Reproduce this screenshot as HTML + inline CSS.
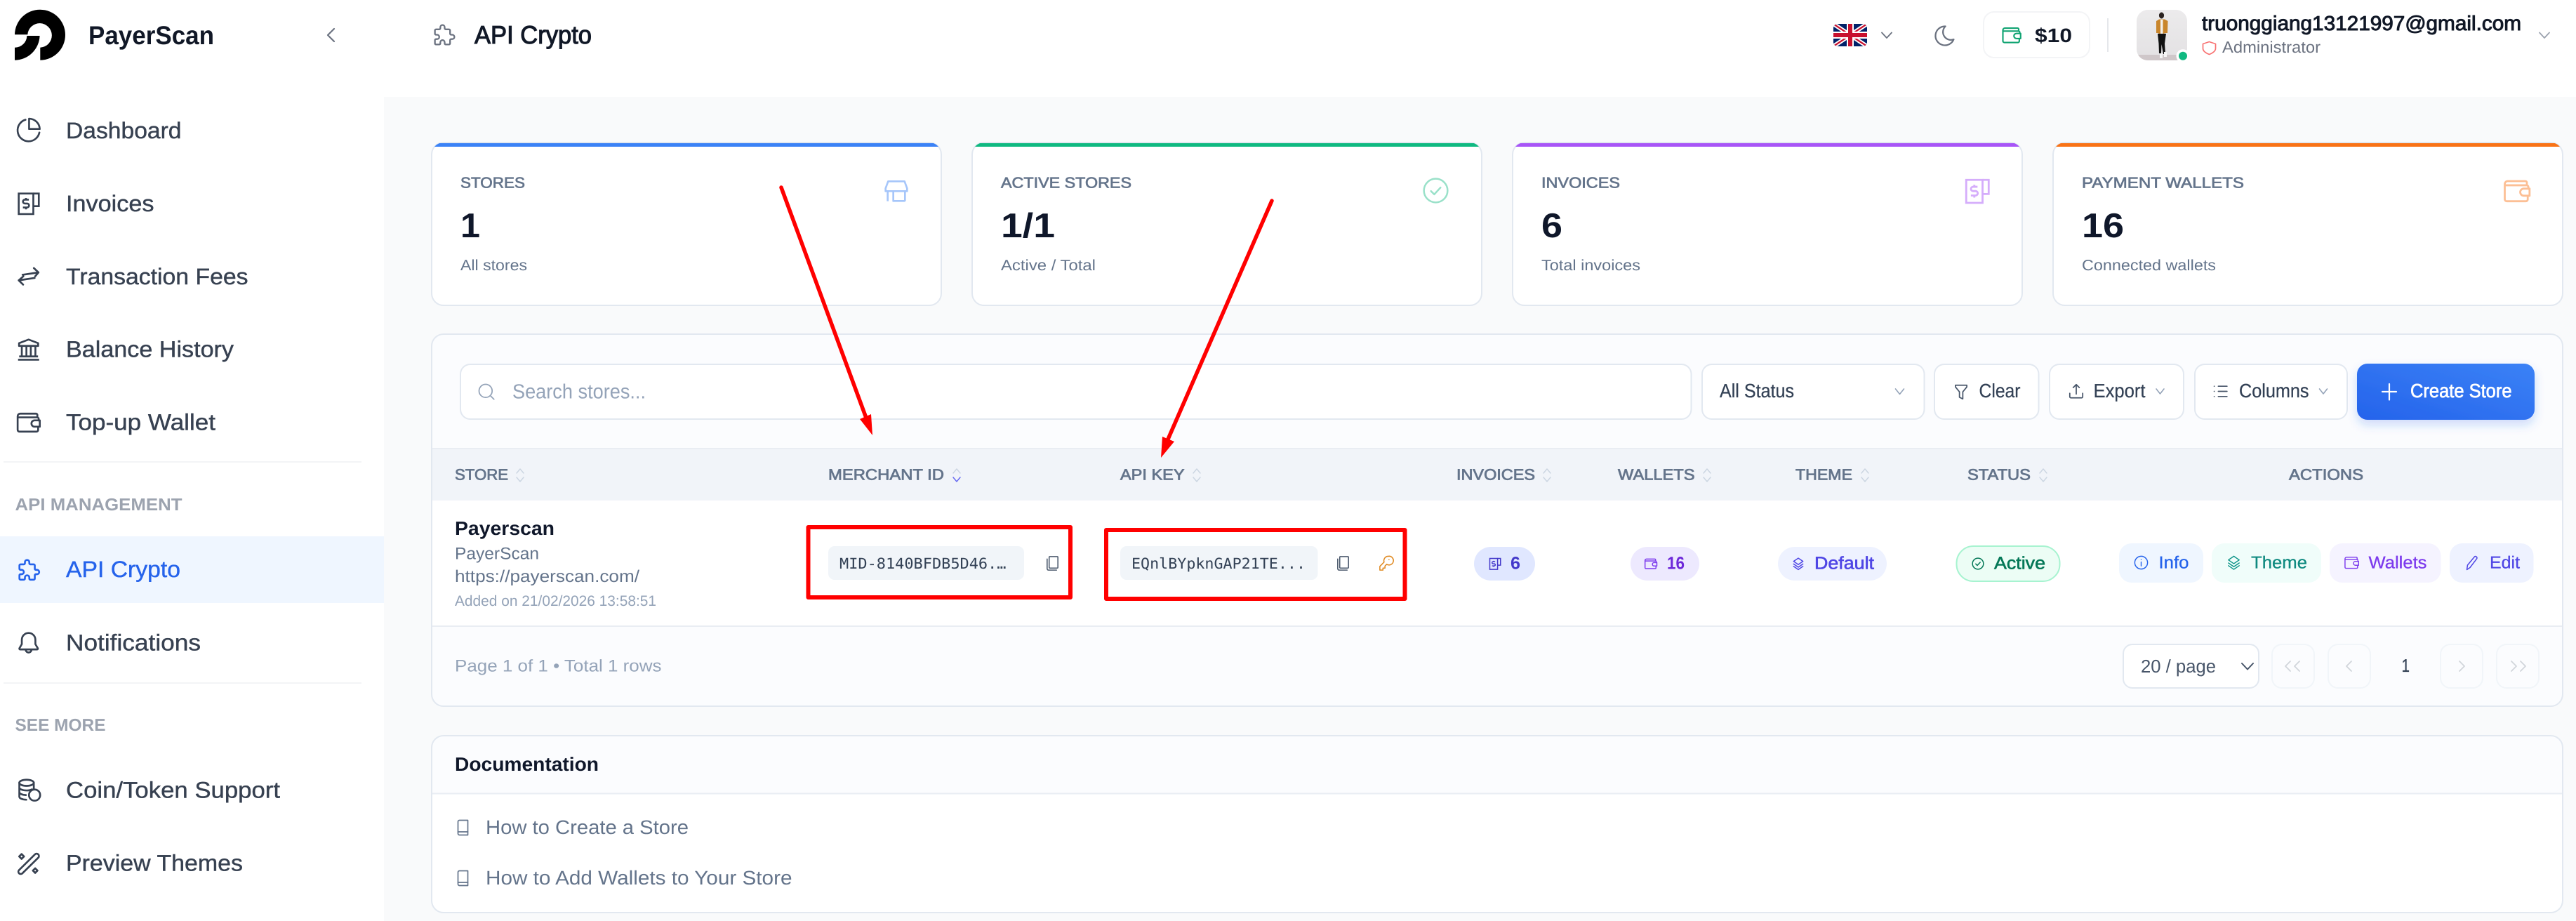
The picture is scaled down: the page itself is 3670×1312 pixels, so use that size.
<!DOCTYPE html>
<html><head><meta charset="utf-8"><title>API Crypto</title>
<style>
html,body{margin:0;padding:0;background:#f9fafb;width:3670px;height:1312px;overflow:hidden}
svg{display:block}
text{font-family:"Liberation Sans",Arial,sans-serif;text-rendering:geometricPrecision}
.mono{font-family:"DejaVu Sans Mono","Liberation Mono",monospace}
.b{font-weight:700}
.nav{font-size:32.5px;fill:#374151;stroke:#374151;stroke-width:.4}
.sec{font-size:24.5px;font-weight:700;fill:#9ca3af}
.lab{font-size:21.5px;fill:#64748b;stroke:#64748b;stroke-width:.7}
.num{font-size:49px;font-weight:700;fill:#0f172a}
.sub{font-size:21.5px;fill:#64748b}
.th{font-size:22px;fill:#64748b;stroke:#64748b;stroke-width:.8}
.tb{font-size:27.5px;fill:#334155;stroke:#334155;stroke-width:.25}
.act{font-size:24.5px;stroke-width:.3}
.ic{stroke-width:1.7}
</style></head>
<body>
<svg xmlns="http://www.w3.org/2000/svg" width="3670" height="1312" viewBox="0 0 3670 1312">
<defs>
<symbol id="pie" viewBox="1.2 1.4 22 22" fill="none" stroke="currentColor" stroke-linecap="round" stroke-linejoin="round"><path d="M9.6 3.5A9.2 9.2 0 1 0 21.2 14.2"/><path d="M12.6 2.6v8.6h8.9a9 9 0 0 0-8.9-8.6z"/></symbol>
<symbol id="inv" viewBox="0 0 24 24" fill="none" stroke="currentColor" stroke-linejoin="miter"><path d="M16.3 3H3v18.7h13.3z"/><path d="M16.3 3h5v11.5h-5"/><path d="M12.2 8.6H8.6a1.6 1.6 0 0 0 0 3.5h2a1.6 1.6 0 0 1 0 3.6H6.8M9.6 7v1.6M9.6 15.7v1.7"/></symbol>
<symbol id="swap" viewBox="0 0 24 24" fill="none" stroke="currentColor" stroke-linecap="round" stroke-linejoin="round"><path d="M6.5 10.5 21 8.4M16.8 4.4 21 8.4 18 11.9"/><path d="M17.5 13.4 3 15.6M7.2 11.9 3 15.6l4 3.9"/></symbol>
<symbol id="bank" viewBox="0 0 24 24" fill="none" stroke="currentColor" stroke-linejoin="round"><path d="M3.3 6.3 12 3l8.7 3.3v2.5H3.3z"/><path d="M5.8 9v9M10 9v9M14 9v9M18.2 9v9M3.4 18.4h17.2M2.4 21.4h19.2"/></symbol>
<symbol id="wal" viewBox="0 0 24 24" fill="none" stroke="currentColor" stroke-linecap="round" stroke-linejoin="round"><path d="M20 7.2V5.2A1.2 1.2 0 0 0 18.8 4H4.4A2.4 2.4 0 0 0 2 6.4v12.4A1.6 1.6 0 0 0 3.6 20.4h15.6A1.5 1.5 0 0 0 20.7 19v-2.6"/><path d="M2.4 7.4h17.4a1.4 1.4 0 0 1 1.4 1.4v1.4"/><path d="M22.2 10.1h-4.7a2.9 2.9 0 0 0 0 5.8h4.7z"/></symbol>
<symbol id="puz" viewBox="0 0 24 24" fill="none" stroke="currentColor" stroke-linecap="round" stroke-linejoin="round"><path d="M4 7h3a1 1 0 0 0 1-1V5a2 2 0 0 1 4 0v1a1 1 0 0 0 1 1h3a1 1 0 0 1 1 1v3a1 1 0 0 0 1 1h1a2 2 0 0 1 0 4h-1a1 1 0 0 0-1 1v3a1 1 0 0 1-1 1h-3a1 1 0 0 1-1-1v-1a2 2 0 0 0-4 0v1a1 1 0 0 1-1 1H4a1 1 0 0 1-1-1v-3a1 1 0 0 1 1-1h1a2 2 0 0 0 0-4H4a1 1 0 0 1-1-1V8a1 1 0 0 1 1-1"/></symbol>
<symbol id="bell" viewBox="0 0 24 24" fill="none" stroke="currentColor" stroke-linecap="round" stroke-linejoin="round"><path d="M12 3a6.2 6.2 0 0 0-6.2 6.2v4L3.6 17a.7.7 0 0 0 .6 1h15.6a.7.7 0 0 0 .6-1l-2.2-3.8v-4A6.2 6.2 0 0 0 12 3z"/><path d="M9.4 18.2a2.6 2.6 0 0 0 5.2 0"/></symbol>
<symbol id="coin" viewBox="0 0 24 24" fill="none" stroke="currentColor" stroke-linecap="round" stroke-linejoin="round"><ellipse cx="9.5" cy="5.2" rx="6.6" ry="2.8"/><path d="M2.9 5.2v12.6c0 1.6 3 2.8 6.3 2.8M2.9 9.4c0 1.6 3 2.8 6.6 2.8 2 0 3.8-.4 5-1M2.9 13.6c0 1.6 3 2.8 6 2.8M16.1 5.2v5.4"/><circle cx="16.8" cy="16.4" r="5.1"/></symbol>
<symbol id="wand" viewBox="0 0 24 24" fill="none" stroke="currentColor" stroke-linecap="round" stroke-linejoin="round"><path d="M3.3 18.2 17.8 3.9a2.1 2.1 0 0 1 3 3L6.3 21.2a2.1 2.1 0 0 1-3-3z"/><path d="M5.6 3.6 7.8 5.8 5.6 8 3.4 5.8zM18 16.6l2.1 2.1-2.1 2.1-2.1-2.1z"/></symbol>
<symbol id="store" viewBox="0 0 24 24" fill="none" stroke="currentColor" stroke-linejoin="round"><path d="M5 3.8h14l2.2 6v2.4H2.8V9.8z"/><path d="M4.6 12.2v8.6M19.4 12.2v8.6M9.4 12.2v8.4h10"/></symbol>
<symbol id="chk" viewBox="0 0 24 24" fill="none" stroke="currentColor" stroke-linecap="round" stroke-linejoin="round"><circle cx="12" cy="12" r="9.4"/><path d="M8.2 12.4l2.6 2.6 5-5.4"/></symbol>
<symbol id="search" viewBox="0 0 24 24" fill="none" stroke="currentColor" stroke-linecap="round"><circle cx="11" cy="11" r="8"/><path d="M17 17l4.2 4.2"/></symbol>
<symbol id="filter" viewBox="0 0 24 24" fill="none" stroke="currentColor" stroke-linejoin="round"><path d="M4.5 3.5h15v2.2l-5.3 6.5v9.3l-4.4-2.2v-7.1L4.5 5.7z"/></symbol>
<symbol id="up" viewBox="0 0 24 24" fill="none" stroke="currentColor" stroke-linecap="round" stroke-linejoin="round"><path d="M12 16V3.5M8 7.5l4-4 4 4M3.5 15v4.5a1.5 1.5 0 0 0 1.5 1.5h14a1.5 1.5 0 0 0 1.5-1.5V15"/></symbol>
<symbol id="list" viewBox="0 0 24 24" fill="none" stroke="currentColor" stroke-linecap="round"><path d="M9 5h12M9 12h12M9 19h12M3.4 5h.1M3.4 12h.1M3.4 19h.1"/></symbol>
<symbol id="info" viewBox="0 0 24 24" fill="none" stroke="currentColor" stroke-linecap="round"><circle cx="12" cy="12" r="9.5"/><path d="M12 11v6M12 7.5v.1"/></symbol>
<symbol id="lay" viewBox="0 0 24 24" fill="none" stroke="currentColor" stroke-linecap="round" stroke-linejoin="round"><path d="M12 2.5 4 8l8 5.5L20 8z"/><path d="M4 12.5 12 18l8-5.5M4 16.5l8 5.5 8-5.5"/></symbol>
<symbol id="pen" viewBox="0 0 24 24" fill="none" stroke="currentColor" stroke-linecap="round" stroke-linejoin="round"><path d="M4.5 21.5 5.5 15 15.5 3a2.2 2.2 0 0 1 3.2 2.8L9 18.5z"/></symbol>
<symbol id="copy" viewBox="0 0 24 24" fill="none" stroke="currentColor" stroke-linecap="round" stroke-linejoin="round"><path d="M8 2h11a1 1 0 0 1 1 1v15a1 1 0 0 1-1 1H8a1 1 0 0 1-1-1V3a1 1 0 0 1 1-1z"/><path d="M4 5.5V20a2 2 0 0 0 2 2h12"/></symbol>
<symbol id="key" viewBox="0 0 24 24" fill="none" stroke="currentColor" stroke-linecap="round" stroke-linejoin="round"><path d="M15.5 1.5a6.5 6.5 0 0 0-6.2 8.6L3 16.5V22h4.6v-3h3v-3l2.6-2.6a6.5 6.5 0 1 0 2.3-11.9z"/><path d="M16.5 6.6h.1"/></symbol>
<symbol id="book" viewBox="0 0 24 24" fill="none" stroke="currentColor" stroke-linecap="round" stroke-linejoin="round"><path d="M6.5 1.5h12v21h-12a2 2 0 0 1-2-2v-17a2 2 0 0 1 2-2z"/><path d="M4.5 18h14"/></symbol>
<symbol id="moon" viewBox="0 0 24 24" fill="none" stroke="currentColor" stroke-linecap="round" stroke-linejoin="round"><path d="M12 3h.4a7.5 7.5 0 0 0 7.9 12.4A9 9 0 1 1 12 3z"/></symbol>
<clipPath id="cc1"><rect x="615" y="203" width="726" height="232" rx="17"/></clipPath>
<clipPath id="cc2"><rect x="1385" y="203" width="726" height="232" rx="17"/></clipPath>
<clipPath id="cc3"><rect x="2155" y="203" width="726" height="232" rx="17"/></clipPath>
<clipPath id="cc4"><rect x="2925" y="203" width="726" height="232" rx="17"/></clipPath>
<clipPath id="cdoc"><rect x="615" y="1048" width="3036" height="252" rx="17"/></clipPath>
<clipPath id="flag"><rect x="2612" y="34" width="48" height="32" rx="6"/></clipPath>
<clipPath id="ava"><rect x="3044" y="14" width="72" height="72" rx="16"/></clipPath>
<linearGradient id="cg" x1="0" y1="1" x2="1" y2="0"><stop offset="0" stop-color="#2563eb"/><stop offset="1" stop-color="#3b82f6"/></linearGradient>
<linearGradient id="avg" x1="0" y1="0" x2="0" y2="1"><stop offset="0" stop-color="#ecebec"/><stop offset="1" stop-color="#e3e1e3"/></linearGradient>
<filter id="sh" x="-10%" y="-20%" width="120%" height="160%"><feDropShadow dx="0" dy="7" stdDeviation="7" flood-color="#2563eb" flood-opacity=".22"/></filter>
</defs>

<rect width="3670" height="1312" fill="#f9fafb"/>
<rect width="3670" height="138" fill="#fff"/>
<rect width="547" height="1312" fill="#fff"/>

<!-- Logo -->
<path fill="#000" d="M21 49.3A36 36 0 1 1 57.3 85.7V67.7A17.3 17.3 0 1 0 39.3 49.3Z"/>
<path fill="#000" d="M38.4 51H56.6A36 36 0 0 1 21 85.7V67.7A17.2 17.2 0 0 0 38.4 51Z"/>
<text x="126" y="63" class="b" font-size="37" fill="#111827" textLength="179" lengthAdjust="spacingAndGlyphs">PayerScan</text>
<path d="M476 41 467 50 476 59" fill="none" stroke="#6b7280" stroke-width="2.2" stroke-linecap="round" stroke-linejoin="round"/>

<!-- Nav -->
<use href="#pie" class="ic" style="stroke-width:1.55" x="22" y="167" width="37.5" height="37.5" color="#374151"/>
<text x="94" y="197" class="nav" textLength="164.5" lengthAdjust="spacingAndGlyphs">Dashboard</text>
<use href="#inv" class="ic" x="22" y="271" width="37.5" height="37.5" color="#374151"/>
<text x="94" y="301" class="nav" textLength="125.5" lengthAdjust="spacingAndGlyphs">Invoices</text>
<use href="#swap" class="ic" x="22" y="375" width="37.5" height="37.5" color="#374151"/>
<text x="94" y="405" class="nav" textLength="259.5" lengthAdjust="spacingAndGlyphs">Transaction Fees</text>
<use href="#bank" class="ic" x="22" y="479" width="37.5" height="37.5" color="#374151"/>
<text x="94" y="508.5" class="nav" textLength="239" lengthAdjust="spacingAndGlyphs">Balance History</text>
<use href="#wal" class="ic" x="22" y="583" width="37.5" height="37.5" color="#374151"/>
<text x="94" y="612.5" class="nav" textLength="213" lengthAdjust="spacingAndGlyphs">Top-up Wallet</text>
<rect x="5" y="657" width="510" height="2" fill="#f3f4f6"/>
<text x="21.5" y="727" class="sec" textLength="238" lengthAdjust="spacingAndGlyphs">API MANAGEMENT</text>
<rect x="0" y="764" width="547" height="95" fill="#eff6ff"/>
<use href="#puz" class="ic" x="23" y="793" width="37.5" height="37.5" color="#2563eb"/>
<text x="94" y="822" class="nav" style="fill:#2563eb;stroke:#2563eb" textLength="163" lengthAdjust="spacingAndGlyphs">API Crypto</text>
<use href="#bell" class="ic" x="22" y="897" width="37.5" height="37.5" color="#374151"/>
<text x="94" y="926.5" class="nav" textLength="192" lengthAdjust="spacingAndGlyphs">Notifications</text>
<rect x="5" y="972" width="510" height="2" fill="#f3f4f6"/>
<text x="21.5" y="1041" class="sec" textLength="129" lengthAdjust="spacingAndGlyphs">SEE MORE</text>
<use href="#coin" class="ic" x="23" y="1107" width="37.5" height="37.5" color="#374151"/>
<text x="94" y="1136.5" class="nav" textLength="305" lengthAdjust="spacingAndGlyphs">Coin/Token Support</text>
<use href="#wand" class="ic" x="22" y="1211" width="37.5" height="37.5" color="#374151"/>
<text x="94" y="1240.5" class="nav" textLength="252" lengthAdjust="spacingAndGlyphs">Preview Themes</text>

<!-- Topbar -->
<use href="#puz" class="ic" style="stroke-width:1.5" x="615" y="31" width="37" height="37" color="#6b7280"/>
<text x="676" y="62" font-size="36" fill="#111827" style="stroke:#111827;stroke-width:1.1" textLength="167" lengthAdjust="spacingAndGlyphs">API Crypto</text>

<g clip-path="url(#flag)">
<rect x="2612" y="34" width="48" height="32" fill="#012169"/>
<path d="M2612 34 2660 66M2660 34 2612 66" stroke="#fff" stroke-width="6"/>
<path d="M2612 34 2660 66M2660 34 2612 66" stroke="#c8102e" stroke-width="2.2"/>
<path d="M2636 34V66M2612 50H2660" stroke="#fff" stroke-width="10"/>
<path d="M2636 34V66M2612 50H2660" stroke="#c8102e" stroke-width="6"/>
</g>
<path d="M2681 46.5 2688 54 2695 46.5" fill="none" stroke="#6b7280" stroke-width="1.8" stroke-linecap="round" stroke-linejoin="round"/>
<use href="#moon" style="stroke-width:1.5" x="2753" y="33" width="36" height="36" color="#6b7280"/>
<rect x="2826" y="17" width="151" height="65" rx="15" fill="#fff" stroke="#f3f4f6" stroke-width="2"/>
<use href="#wal" class="ic" x="2851" y="35" width="30" height="30" color="#10a372"/>
<text x="2899" y="60" class="b" font-size="28" fill="#111827" textLength="53" lengthAdjust="spacingAndGlyphs">$10</text>
<rect x="3002" y="26" width="2" height="48" fill="#e5e7eb"/>
<g clip-path="url(#ava)">
<rect x="3044" y="14" width="72" height="72" fill="url(#avg)"/>
<rect x="3044" y="78" width="72" height="8" fill="#cfc7c9"/>
<ellipse cx="3079.5" cy="22" rx="3.6" ry="4.5" fill="#2a2220"/>
<path d="M3072 30 3076 27.5H3084L3088.5 30 3088 47H3085L3079 49 3074 47H3072Z" fill="#c9862c"/>
<rect x="3078" y="28" width="3.5" height="20" fill="#f4f1ec"/>
<path d="M3074 48H3086L3084 62 3085 77H3082L3079.5 63 3079 76H3076L3075.5 62Z" fill="#111"/>
<rect x="3077" y="76" width="4" height="7" fill="#f5f5f5"/>
<rect x="3083" y="74" width="4" height="7" fill="#f5f5f5"/>
</g>
<circle cx="3110" cy="79.7" r="9.5" fill="#fff"/>
<circle cx="3110" cy="79.7" r="6" fill="#10b981"/>
<text x="3137" y="43" font-size="29" fill="#111827" style="stroke:#111827;stroke-width:.95" textLength="455" lengthAdjust="spacingAndGlyphs">truonggiang13121997@gmail.com</text>
<path d="M3147.5 59.5 3156.5 62.5V69C3156.5 73 3152.5 75.5 3147.5 77.5 3142.5 75.5 3138.5 73 3138.5 69V62.5Z" fill="none" stroke="#f87171" stroke-width="1.7" stroke-linejoin="round"/>
<text x="3166" y="75" font-size="23" fill="#6b7280" textLength="140" lengthAdjust="spacingAndGlyphs">Administrator</text>
<path d="M3618 46.5 3625 54 3632 46.5" fill="none" stroke="#9ca3af" stroke-width="1.8" stroke-linecap="round" stroke-linejoin="round"/>

<!-- Stat cards -->
<g>
<rect x="615" y="203" width="726" height="232" rx="17" fill="#fff" stroke="#e2e8f0" stroke-width="2"/>
<rect x="615" y="204" width="726" height="5" fill="#3b82f6" clip-path="url(#cc1)"/>
<text x="656" y="267.3" class="lab" textLength="92" lengthAdjust="spacingAndGlyphs">STORES</text>
<text x="656" y="338" class="num" textLength="28" lengthAdjust="spacingAndGlyphs">1</text>
<text x="656" y="385" class="sub" textLength="95" lengthAdjust="spacingAndGlyphs">All stores</text>
<use href="#store" style="stroke-width:1.6" x="1256" y="252" width="42" height="40" color="#3b82f6" opacity=".45"/>
</g>
<g>
<rect x="1385" y="203" width="726" height="232" rx="17" fill="#fff" stroke="#e2e8f0" stroke-width="2"/>
<rect x="1385" y="204" width="726" height="5" fill="#10b981" clip-path="url(#cc2)"/>
<text x="1426" y="267.3" class="lab" textLength="186" lengthAdjust="spacingAndGlyphs">ACTIVE STORES</text>
<text x="1426" y="338" class="num" textLength="77" lengthAdjust="spacingAndGlyphs">1/1</text>
<text x="1426" y="385" class="sub" textLength="135" lengthAdjust="spacingAndGlyphs">Active / Total</text>
<use href="#chk" style="stroke-width:1.4" x="2024" y="250" width="43" height="43" color="#10b981" opacity=".42"/>
</g>
<g>
<rect x="2155" y="203" width="726" height="232" rx="17" fill="#fff" stroke="#e2e8f0" stroke-width="2"/>
<rect x="2155" y="204" width="726" height="5" fill="#a855f7" clip-path="url(#cc3)"/>
<text x="2196" y="267.3" class="lab" textLength="112" lengthAdjust="spacingAndGlyphs">INVOICES</text>
<text x="2196" y="338" class="num" textLength="30" lengthAdjust="spacingAndGlyphs">6</text>
<text x="2196" y="385" class="sub" textLength="141" lengthAdjust="spacingAndGlyphs">Total invoices</text>
<use href="#inv" style="stroke-width:1.6" x="2796" y="251" width="42" height="42" color="#a855f7" opacity=".48"/>
</g>
<g>
<rect x="2925" y="203" width="726" height="232" rx="17" fill="#fff" stroke="#e2e8f0" stroke-width="2"/>
<rect x="2925" y="204" width="726" height="5" fill="#f97316" clip-path="url(#cc4)"/>
<text x="2966" y="267.3" class="lab" textLength="231" lengthAdjust="spacingAndGlyphs">PAYMENT WALLETS</text>
<text x="2966" y="338" class="num" textLength="60" lengthAdjust="spacingAndGlyphs">16</text>
<text x="2966" y="385" class="sub" textLength="191" lengthAdjust="spacingAndGlyphs">Connected wallets</text>
<use href="#wal" style="stroke-width:1.6" x="3565" y="251" width="42" height="42" color="#f97316" opacity=".45"/>
</g>

<!-- Main card -->
<rect x="615" y="476" width="3036" height="530" rx="17" fill="#fbfcfe" stroke="#e2e8f0" stroke-width="2"/>
<rect x="616" y="638" width="3034" height="75" fill="#f1f4f9"/>
<rect x="616" y="638" width="3034" height="2" fill="#e9edf3"/>
<rect x="616" y="713" width="3034" height="178" fill="#fff"/>
<rect x="616" y="891" width="3034" height="2" fill="#e9edf3"/>

<!-- Toolbar -->
<rect x="656" y="519" width="1753.5" height="78" rx="14" fill="#fff" stroke="#e2e8f0" stroke-width="2"/>
<use href="#search" style="stroke-width:1.5" x="679" y="544" width="28" height="28" color="#94a3b8"/>
<text x="730" y="567.5" font-size="29" fill="#94a3b8" textLength="190" lengthAdjust="spacingAndGlyphs">Search stores...</text>
<rect x="2425" y="519" width="316.5" height="78" rx="14" fill="#fff" stroke="#e2e8f0" stroke-width="2"/>
<text x="2450" y="566" class="tb" textLength="106" lengthAdjust="spacingAndGlyphs">All Status</text>
<path d="M2700.5 554 2706.5 561.5 2712.5 554" fill="none" stroke="#94a3b8" stroke-width="1.6" stroke-linecap="round" stroke-linejoin="round"/>
<rect x="2756" y="519" width="148.5" height="78" rx="14" fill="#fff" stroke="#e2e8f0" stroke-width="2"/>
<use href="#filter" style="stroke-width:1.6" x="2780" y="545" width="28" height="26" color="#475569"/>
<text x="2819.5" y="566" class="tb" textLength="59" lengthAdjust="spacingAndGlyphs">Clear</text>
<rect x="2920" y="519" width="191" height="78" rx="14" fill="#fff" stroke="#e2e8f0" stroke-width="2"/>
<use href="#up" style="stroke-width:1.6" x="2945" y="544" width="26" height="26" color="#475569"/>
<text x="2982.5" y="566" class="tb" textLength="74" lengthAdjust="spacingAndGlyphs">Export</text>
<path d="M3072 554 3077.5 561 3083 554" fill="none" stroke="#94a3b8" stroke-width="1.6" stroke-linecap="round" stroke-linejoin="round"/>
<rect x="3127" y="519" width="217" height="78" rx="14" fill="#fff" stroke="#e2e8f0" stroke-width="2"/>
<use href="#list" style="stroke-width:1.6" x="3151" y="545" width="25" height="25" color="#475569"/>
<text x="3190" y="566" class="tb" textLength="99.5" lengthAdjust="spacingAndGlyphs">Columns</text>
<path d="M3304.5 554 3310 561 3315.5 554" fill="none" stroke="#94a3b8" stroke-width="1.6" stroke-linecap="round" stroke-linejoin="round"/>
<rect x="3358" y="518" width="253" height="80" rx="15" fill="url(#cg)" filter="url(#sh)"/>
<path d="M3404 547V569.5M3394 558H3414" stroke="#fff" stroke-width="2.2" stroke-linecap="round"/>
<text x="3434" y="566" font-size="27.5" fill="#fff" stroke="#fff" stroke-width=".7" textLength="144.5" lengthAdjust="spacingAndGlyphs">Create Store</text>

<!-- Table head -->
<text x="648" y="683.3" class="th" textLength="76" lengthAdjust="spacingAndGlyphs">STORE</text>
<text x="1180" y="683.3" class="th" textLength="165" lengthAdjust="spacingAndGlyphs">MERCHANT ID</text>
<text x="1596" y="683.3" class="th" textLength="91.5" lengthAdjust="spacingAndGlyphs">API KEY</text>
<text x="2075" y="683.3" class="th" textLength="112" lengthAdjust="spacingAndGlyphs">INVOICES</text>
<text x="2305" y="683.3" class="th" textLength="109.5" lengthAdjust="spacingAndGlyphs">WALLETS</text>
<text x="2558" y="683.3" class="th" textLength="81" lengthAdjust="spacingAndGlyphs">THEME</text>
<text x="2803" y="683.3" class="th" textLength="90" lengthAdjust="spacingAndGlyphs">STATUS</text>
<text x="3261" y="683.3" class="th" textLength="106" lengthAdjust="spacingAndGlyphs">ACTIONS</text>
<g fill="none" stroke="#cbd5e1" stroke-width="1.4" stroke-linecap="round" stroke-linejoin="round">
<path d="M-5-3 0-9 5-3M-5 3 0 9 5 3" transform="translate(741,677)"/>
<path d="M-5-3 0-9 5-3" transform="translate(1363,677)"/>
<path d="M-5 3 0 9 5 3" transform="translate(1363,677)" stroke="#6366f1"/>
<path d="M-5-3 0-9 5-3M-5 3 0 9 5 3" transform="translate(1705,677)"/>
<path d="M-5-3 0-9 5-3M-5 3 0 9 5 3" transform="translate(2204,677)"/>
<path d="M-5-3 0-9 5-3M-5 3 0 9 5 3" transform="translate(2432,677)"/>
<path d="M-5-3 0-9 5-3M-5 3 0 9 5 3" transform="translate(2657,677)"/>
<path d="M-5-3 0-9 5-3M-5 3 0 9 5 3" transform="translate(2911,677)"/>
</g>

<!-- Row -->
<text x="648" y="762" class="b" font-size="27.5" fill="#0f172a" textLength="142" lengthAdjust="spacingAndGlyphs">Payerscan</text>
<text x="648" y="796.5" font-size="24" fill="#64748b" textLength="120" lengthAdjust="spacingAndGlyphs">PayerScan</text>
<text x="648" y="829" font-size="24" fill="#64748b" textLength="263" lengthAdjust="spacingAndGlyphs">https://payerscan.com/</text>
<text x="648" y="863" font-size="21" fill="#94a3b8" textLength="287" lengthAdjust="spacingAndGlyphs">Added on 21/02/2026 13:58:51</text>

<rect x="1180" y="778" width="279" height="48" rx="9" fill="#f1f5f9"/>
<text x="1196" y="810" class="mono" font-size="21" fill="#334155" textLength="237.5" lengthAdjust="spacingAndGlyphs">MID-8140BFDB5D46.…</text>
<use href="#copy" style="stroke-width:1.6" x="1488" y="791" width="23" height="23" color="#475569"/>
<rect x="1596" y="778" width="281.5" height="48" rx="9" fill="#f1f5f9"/>
<text x="1612" y="810" class="mono" font-size="21" fill="#334155" textLength="248" lengthAdjust="spacingAndGlyphs">EQnlBYpknGAP21TE...</text>
<use href="#copy" style="stroke-width:1.6" x="1902" y="791" width="23" height="23" color="#475569"/>
<use href="#key" style="stroke-width:1.6" x="1963" y="791" width="23" height="23" color="#e08a22"/>

<!-- Badges -->
<rect x="2100" y="779" width="87" height="48" rx="24" fill="#e0e7ff"/>
<use href="#inv" style="stroke-width:1.8" x="2120" y="793" width="20" height="20" color="#4338ca"/>
<text x="2152" y="810.5" class="b" font-size="25" fill="#4338ca" textLength="14" lengthAdjust="spacingAndGlyphs">6</text>
<rect x="2323" y="779" width="98" height="48" rx="24" fill="#ede9fe"/>
<use href="#wal" style="stroke-width:1.8" x="2342" y="793" width="20" height="20" color="#7c3aed"/>
<text x="2375" y="810.5" class="b" font-size="25" fill="#6d28d9" textLength="25" lengthAdjust="spacingAndGlyphs">16</text>
<rect x="2533" y="779" width="155" height="48" rx="24" fill="#eef2ff"/>
<use href="#lay" style="stroke-width:1.8" x="2552" y="793" width="20" height="20" color="#4f46e5"/>
<text x="2585" y="810.5" font-size="25" fill="#4f46e5" stroke="#4f46e5" stroke-width=".6" textLength="85" lengthAdjust="spacingAndGlyphs">Default</text>
<rect x="2787.5" y="778" width="147" height="50" rx="24" fill="#ecfdf5" stroke="#a7f3d0" stroke-width="2"/>
<use href="#chk" style="stroke-width:1.8" x="2808" y="793" width="20" height="20" color="#047857"/>
<text x="2841" y="810.5" font-size="25" fill="#047857" stroke="#047857" stroke-width=".6" textLength="73" lengthAdjust="spacingAndGlyphs">Active</text>

<!-- Actions -->
<rect x="3019" y="774" width="120" height="56" rx="18" fill="#eff6ff"/>
<use href="#info" style="stroke-width:1.5" x="3039" y="790" width="23" height="23" color="#2563eb"/>
<text x="3075.5" y="809.5" class="act" fill="#2563eb" stroke="#2563eb" textLength="43" lengthAdjust="spacingAndGlyphs">Info</text>
<rect x="3151" y="774" width="156" height="56" rx="18" fill="#f0fdfa"/>
<use href="#lay" style="stroke-width:1.5" x="3171" y="790" width="23" height="23" color="#0d9488"/>
<text x="3207" y="809.5" class="act" fill="#0f8a80" stroke="#0f8a80" textLength="80" lengthAdjust="spacingAndGlyphs">Theme</text>
<rect x="3319" y="774" width="158.5" height="56" rx="18" fill="#f5f3ff"/>
<use href="#wal" style="stroke-width:1.5" x="3339" y="790" width="23" height="23" color="#7c3aed"/>
<text x="3374.5" y="809.5" class="act" fill="#7c3aed" stroke="#7c3aed" textLength="83" lengthAdjust="spacingAndGlyphs">Wallets</text>
<rect x="3490" y="774" width="119.5" height="56" rx="18" fill="#eef2ff"/>
<use href="#pen" style="stroke-width:1.5" x="3510" y="790" width="24" height="24" color="#4f46e5"/>
<text x="3547" y="809.5" class="act" fill="#4f46e5" stroke="#4f46e5" textLength="43" lengthAdjust="spacingAndGlyphs">Edit</text>

<!-- Footer of table -->
<text x="648" y="956.5" font-size="24" fill="#94a3b8" textLength="294.5" lengthAdjust="spacingAndGlyphs">Page 1 of 1 • Total 1 rows</text>
<rect x="3025" y="918" width="193" height="62" rx="13" fill="#fff" stroke="#e2e8f0" stroke-width="2"/>
<text x="3050" y="958" font-size="26" fill="#475569" textLength="107" lengthAdjust="spacingAndGlyphs">20 / page</text>
<path d="M3194 945 3202 953.5 3210 945" fill="none" stroke="#475569" stroke-width="2" stroke-linecap="round" stroke-linejoin="round"/>
<g fill="none" stroke="#f1f5f9" stroke-width="2">
<rect x="3237" y="918" width="60" height="62" rx="14"/>
<rect x="3317" y="918" width="60" height="62" rx="14"/>
<rect x="3477" y="918" width="60" height="62" rx="14"/>
<rect x="3557" y="918" width="60" height="62" rx="14"/>
</g>
<g fill="none" stroke="#d1d5db" stroke-width="1.8" stroke-linecap="round" stroke-linejoin="round">
<path d="M3263 942 3256 949 3263 956M3276 942 3269 949 3276 956"/>
<path d="M3350 942 3343 949 3350 956"/>
<path d="M3504 942 3511 949 3504 956"/>
<path d="M3578 942 3585 949 3578 956M3591 942 3598 949 3591 956"/>
</g>
<text x="3421.5" y="957" font-size="26" fill="#334155" stroke="#334155" stroke-width=".3" textLength="11.5" lengthAdjust="spacingAndGlyphs">1</text>

<!-- Documentation card -->
<rect x="615" y="1048" width="3036" height="252" rx="17" fill="#fbfcfe"/>
<rect x="615" y="1131" width="3036" height="170" fill="#fff" clip-path="url(#cdoc)"/>
<rect x="615" y="1048" width="3036" height="252" rx="17" fill="none" stroke="#e2e8f0" stroke-width="2"/>
<rect x="616" y="1129.5" width="3034" height="2" fill="#e9edf3"/>
<text x="648" y="1098" class="b" font-size="27.5" fill="#0f172a" textLength="205" lengthAdjust="spacingAndGlyphs">Documentation</text>
<use href="#book" style="stroke-width:1.7" x="648" y="1167" width="24" height="24" color="#64748b"/>
<text x="692" y="1188" font-size="28" fill="#64748b" textLength="289" lengthAdjust="spacingAndGlyphs">How to Create a Store</text>
<use href="#book" style="stroke-width:1.7" x="648" y="1239" width="24" height="24" color="#64748b"/>
<text x="692" y="1260" font-size="28" fill="#64748b" textLength="436.5" lengthAdjust="spacingAndGlyphs">How to Add Wallets to Your Store</text>

<!-- Annotations -->
<g fill="none" stroke="#ff0000" stroke-width="6" stroke-linejoin="round">
<rect x="1151.5" y="751" width="373.5" height="100"/>
<rect x="1576" y="755" width="425.5" height="98"/>
</g>
<path d="M1113 267 1235 598M1812 286 1663 628" fill="none" stroke="#ff0000" stroke-width="5.5" stroke-linecap="round"/>
<polygon points="1243,620 1225,597 1241,590" fill="#ff0000"/>
<polygon points="1654,652 1656,622 1673,629" fill="#ff0000"/>
</svg>
</body></html>
